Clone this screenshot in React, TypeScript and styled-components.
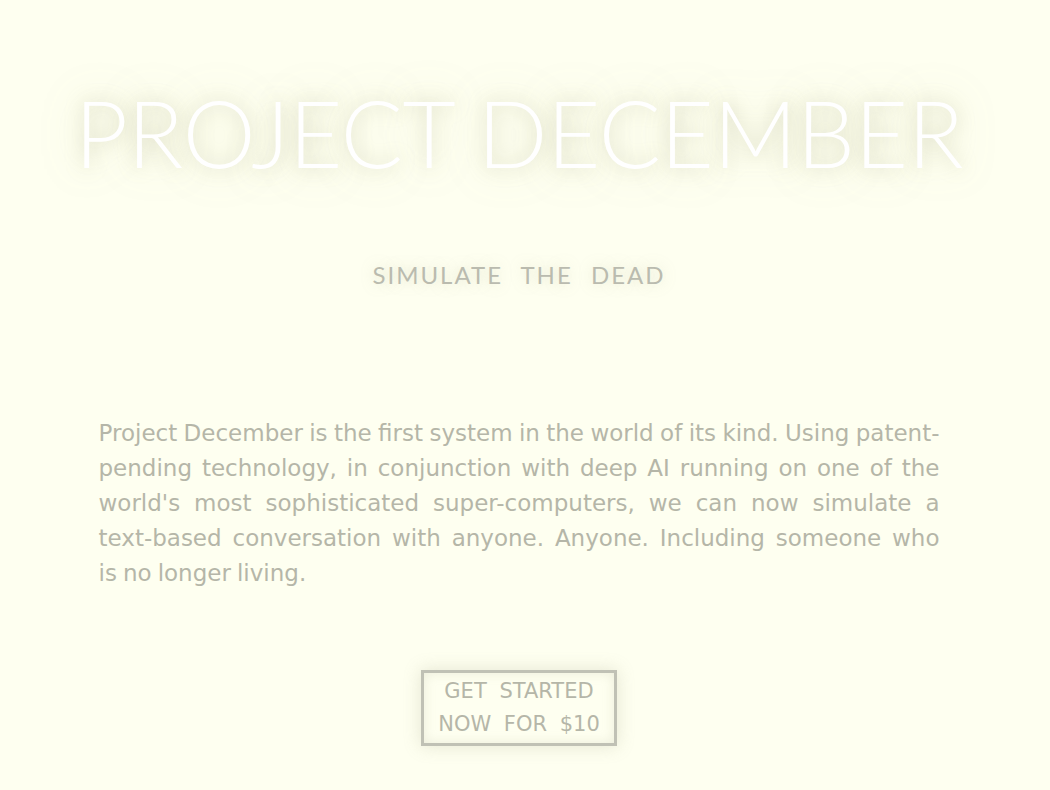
import React from "react";
import styled, { createGlobalStyle } from "styled-components";

const GlobalStyle = createGlobalStyle`
  html, body {
    margin: 0;
    padding: 0;
    background: #fefff0;
  }
  body {
    font-family: "DejaVu Sans", "Lato", sans-serif;
    color: #b5b6a8;
  }
`;

const Page = styled.div`
  display: flex;
  flex-direction: column;
  align-items: center;
  padding: 78px 12px 40px 0;
`;

const Title = styled.h1`
  margin: 0;
  font-family: "Lato", sans-serif;
  font-size: 92px;
  font-weight: 300;
  line-height: 110px;
  letter-spacing: -0.3px;
  color: #ffffff;
  text-shadow: 0 0 18px rgba(160, 160, 125, 0.4), 0 0 40px rgba(180, 180, 145, 0.35);
`;

const Tagline = styled.h2`
  margin: 72px 0 0;
  font-family: "Lato", sans-serif;
  font-size: 24px;
  font-weight: 400;
  letter-spacing: 2px;
  word-spacing: 10px;
  color: #babbaf;
  text-shadow: 0 0 14px rgba(170, 170, 140, 0.35);
`;

const Blurb = styled.p`
  width: 841px;
  margin: 127px 0 0;
  font-size: 23px;
  line-height: 35px;
  word-spacing: -1.25px;
  text-align: justify;
  color: #b5b6a8;
`;

// keeps a phrase on one line inside the justified blurb
const Keep = styled.span`
  white-space: nowrap;
`;

const StartButton = styled.a`
  display: flex;
  flex-direction: column;
  align-items: center;
  margin-top: 79px;
  padding: 2px 14px;
  border: 3px solid #c0c1b5;
  font-size: 21px;
  line-height: 33px;
  word-spacing: 6px;
  color: #b5b6a8;
  text-decoration: none;
  cursor: pointer;
  box-shadow: 0 0 16px rgba(170, 170, 140, 0.3), inset 0 0 12px rgba(170, 170, 140, 0.22);
`;

const App: React.FC = () => {
  return (
    <>
      <GlobalStyle />
      <Page>
        <Title>PROJECT DECEMBER</Title>
        <Tagline>SIMULATE THE DEAD</Tagline>
        <Blurb>
          Project December is the first system in the world of its kind. Using
          patent-pending technology, in conjunction with deep AI running on one
          of the world's most sophisticated super-computers, we can now simulate
          a <Keep>text-based</Keep> conversation with anyone. Anyone. Including
          someone who <Keep>is no longer living.</Keep>
        </Blurb>
        <StartButton>
          <span>GET STARTED</span>
          <span>NOW FOR $10</span>
        </StartButton>
      </Page>
    </>
  );
};

export default App;
